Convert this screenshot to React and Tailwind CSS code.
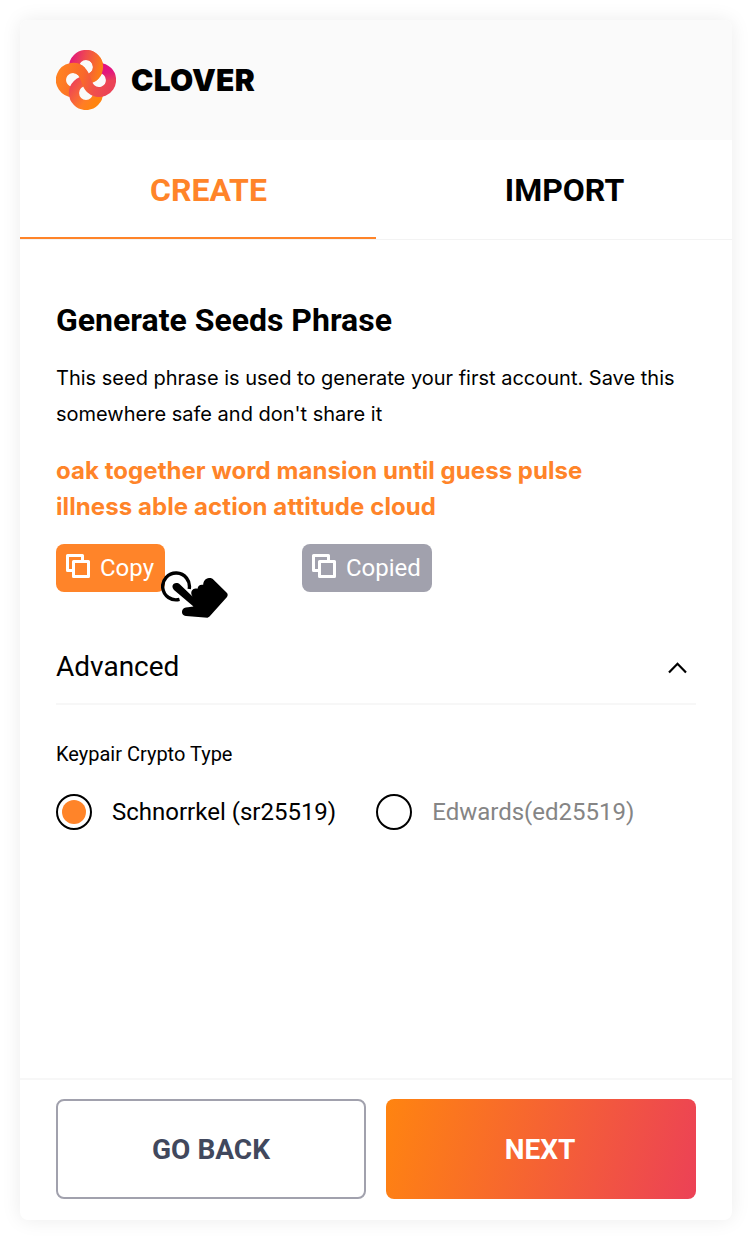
import React from "react";

function Logo() {
  return (
    <svg width="60" height="60" viewBox="0 0 60 60" fill="none">
      <defs>
        <linearGradient id="right" x1="50" y1="15" x2="53" y2="32" gradientUnits="userSpaceOnUse">
          <stop offset="0" stopColor="#e2107f" />
          <stop offset="0.45" stopColor="#e2187c" />
          <stop offset="1" stopColor="#eb4356" />
        </linearGradient>
        <linearGradient id="top" x1="14" y1="10" x2="44" y2="18" gradientUnits="userSpaceOnUse">
          <stop offset="0" stopColor="#e2187c" />
          <stop offset="0.45" stopColor="#ef4a50" />
          <stop offset="1" stopColor="#fc7a1a" />
        </linearGradient>
        <linearGradient id="main" x1="4" y1="26" x2="54" y2="36" gradientUnits="userSpaceOnUse">
          <stop offset="0" stopColor="#ff8022" />
          <stop offset="0.45" stopColor="#f9682b" />
          <stop offset="0.7" stopColor="#f0504c" />
          <stop offset="1" stopColor="#eb4356" />
        </linearGradient>
        <linearGradient id="bottom" x1="14" y1="36" x2="38" y2="54" gradientUnits="userSpaceOnUse">
          <stop offset="0" stopColor="#ee4455" />
          <stop offset="0.7" stopColor="#ff7d26" />
          <stop offset="1" stopColor="#ff8410" />
        </linearGradient>
      </defs>
      <g strokeWidth="10.200">
        <path d="M18 17A12 12 0 1 1 30 29" stroke="url(#top)" />
        <path d="M17 42A12 12 0 1 1 25.490 21.510" stroke="url(#main)" />
        <path d="M42 43A12 12 0 1 1 30 31" stroke="url(#bottom)" />
        <path d="M43 18A12 12 0 0 1 55 30.300" stroke="url(#right)" />
        <path d="M30 5A12 12 0 0 1 36 27.390" stroke="url(#top)" />
        <path d="M17 18A12 12 0 0 1 25.490 21.510C30.500 26.500 29.500 33.500 34.510 38.490A12 12 0 0 0 55 30" stroke="url(#main)" />
      </g>
    </svg>
  );
}

function CopyIcon() {
  return (
    <svg width="24" height="24" viewBox="0 0 24 24" fill="none" stroke="white" strokeWidth="3" strokeLinejoin="round">
      <path d="M7 16.500H1.500V1.500H16.500V7" />
      <rect x="7.500" y="7.500" width="15" height="15" />
    </svg>
  );
}

function Pointer() {
  return (
    <svg className="absolute left-[105px] top-[26px]" width="68" height="49" viewBox="0 0 68 49">
      <path d="M18.500 29.400A13.400 13.400 0 1 1 28.200 19" fill="none" stroke="black" strokeWidth="3.400" />
      <path d="M12.500 14.100C14.500 12.500 17 12.800 19 14.500L31.500 26.500C30 24.500 29.800 22 31 20.500C32 18.700 34 18 36.500 18.700C37 15.700 39 14.200 42.200 14.800C42.300 11 44.500 8.500 48 8C50 7.700 51 8.200 52.300 9.400L65.500 22.600C67 24 67 25.500 66 27L48.500 46.500L46.500 47.700L25 46C21.500 45.500 20.500 43 21.200 40.500C22 38 24 37.300 27 37.300L32.500 36.500L13 20C11 18 11 15.500 12.500 14.100Z" fill="black" />
    </svg>
  );
}

export default function App() {
  return (
    <div className="h-[1240px] w-[752px] bg-white p-5 font-[Roboto,sans-serif] text-black">
      <main className="flex h-[1200px] flex-col overflow-hidden rounded-[8px] bg-white shadow-[0_0_20px_rgba(0,0,0,0.08)]">
        <header className="flex h-[120px] shrink-0 items-center gap-[15px] bg-[#fafafa] px-9">
          <Logo />
          <span className="font-[Inter,sans-serif] text-[30px] font-black leading-9 tracking-[0.2px]">CLOVER</span>
        </header>
        <nav className="flex h-[100px] shrink-0 border-b border-[#f3f3f3] text-[32px] font-bold">
          <button className="w-1/2 border-b-2 border-[#ff8429] pl-[21px] pt-[3px] text-[#ff8429]">CREATE</button>
          <button className="w-1/2 pl-[21px]">IMPORT</button>
        </nav>
        <section className="flex grow flex-col px-9 pt-[60px]">
          <h1 className="text-[32px] font-bold leading-10">Generate Seeds Phrase</h1>
          <p className="mt-5 font-[Inter,sans-serif] text-[20px] leading-9">
            This seed phrase is used to generate your first account. Save this<br />somewhere safe and don't share it
          </p>
          <p className="mt-[21px] font-[Inter,sans-serif] text-[24px] font-bold leading-9 tracking-[0.05px] text-[#ff8429]">
            oak together word mansion until guess pulse<br /><span className="tracking-[0.09px]">illness able action attitude cloud</span>
          </p>
          <div className="relative mt-[19px] flex gap-[137px] text-[24px] text-white">
            <button className="flex h-12 w-[109px] items-center gap-[10px] rounded-[8px] bg-[#ff8429] pl-[10px]"><span className="-mt-1"><CopyIcon /></span>Copy</button>
            <button className="flex h-12 w-[130px] items-center gap-[10px] rounded-[8px] bg-[#a1a1ad] pl-[10px]"><span className="-mt-1"><CopyIcon /></span>Copied</button>
            <Pointer />
          </div>
          <div className="mt-12 flex h-[65px] justify-between border-b-2 border-[#f7f7f7] pr-[9px] pt-[9px] text-[28px] leading-9">
            <span>Advanced</span>
            <svg className="mt-3" width="20" height="14" viewBox="0 0 20 14" fill="none"><path d="M2 11.500L10.500 2.800L19 11.500" stroke="black" strokeWidth="2.200" /></svg>
          </div>
          <h2 className="mt-[35px] text-[20px] leading-7">Keypair Crypto Type</h2>
          <div className="mt-[26px] flex gap-10 text-[24px]">
            <label className="flex items-center gap-5"><span className="flex size-9 items-center justify-center rounded-full border-2 border-black"><span className="size-6 rounded-full bg-[#ff8429]" /></span>Schnorrkel (sr25519)</label>
            <label className="flex items-center gap-5 text-[#858585]"><span className="size-9 rounded-full border-2 border-black" />Edwards(ed25519)</label>
          </div>
        </section>
        <footer className="flex h-[142px] shrink-0 gap-5 border-t-2 border-[#f7f7f7] px-9 pt-[19px] text-[28px] font-bold">
          <button className="h-[100px] w-[310px] rounded-[8px] border-2 border-[#a1a1ad] pt-[2px] text-[#41485d]">GO BACK</button>
          <button className="h-[100px] w-[310px] rounded-[8px] bg-[linear-gradient(104deg,#ff8410_0%,#ec4156_100%)] pr-[2px] pt-[2px] text-white">NEXT</button>
        </footer>
      </main>
    </div>
  );
}
